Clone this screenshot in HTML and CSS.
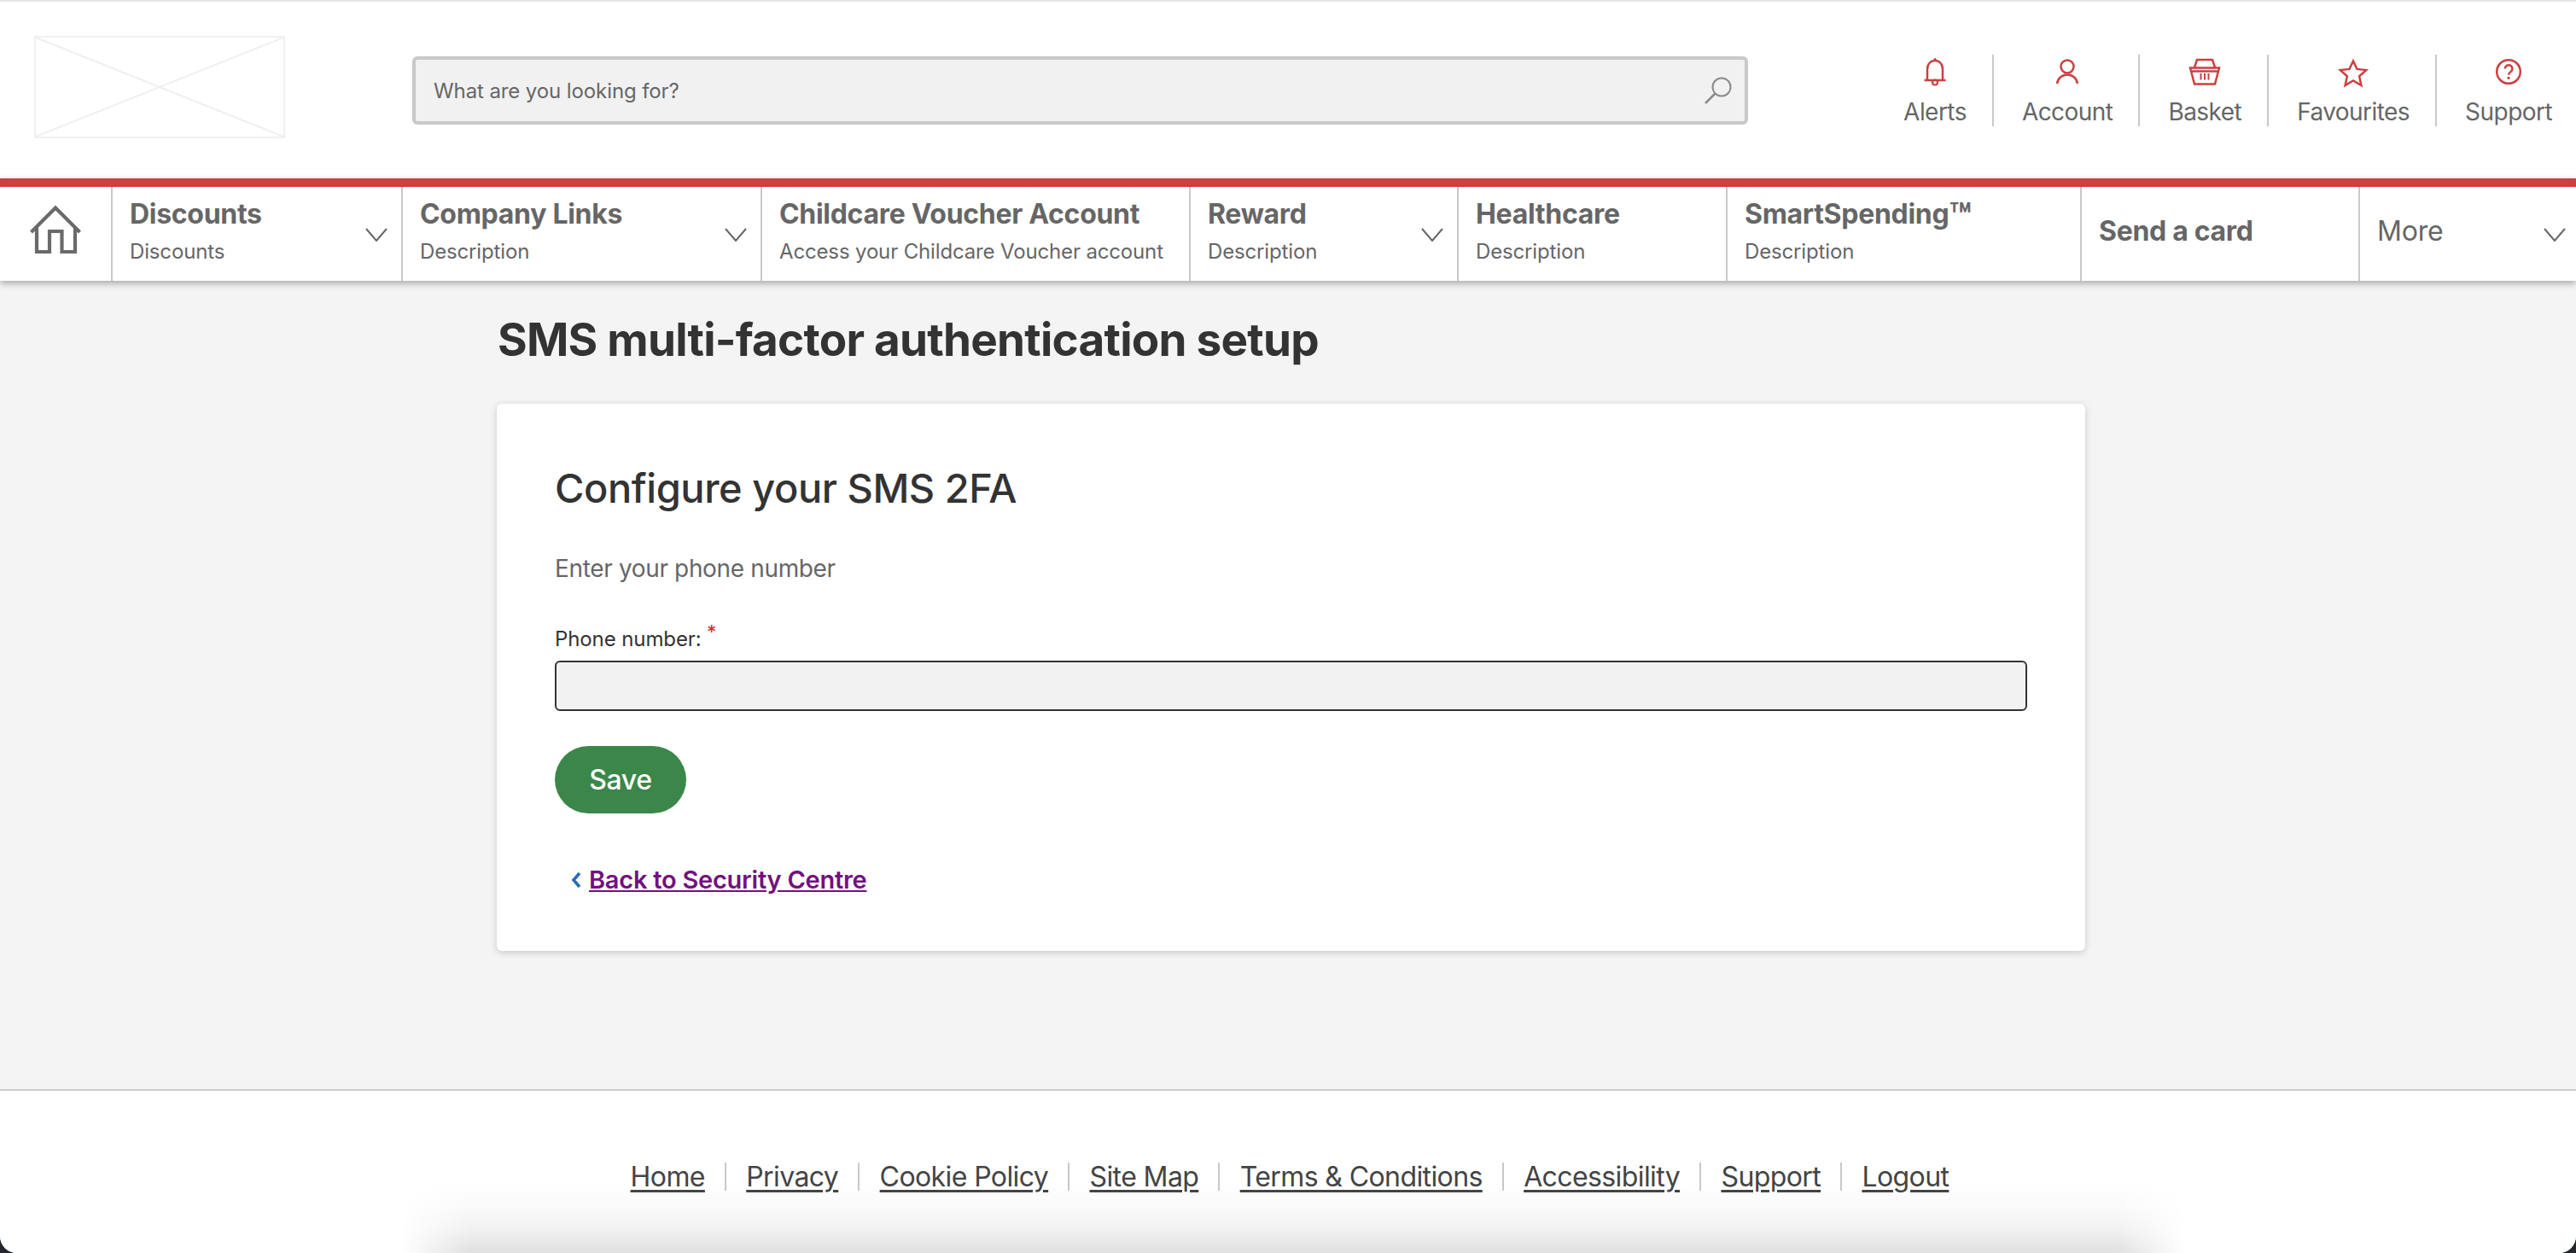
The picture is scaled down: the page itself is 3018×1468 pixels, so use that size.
FILE: index.html
```html
<!DOCTYPE html>
<html lang="en">
<head>
<meta charset="utf-8">
<title>SMS multi-factor authentication setup</title>
<link rel="stylesheet" href="styles.css">
</head>
<body>
<div class="page">
  <header class="header">
    <div class="logo">
      <svg viewBox="0 0 294 120" width="294" height="120" preserveAspectRatio="none"><rect x="1" y="1" width="292" height="118" fill="#fff" stroke="#f0f0f0" stroke-width="2"/><path d="M2 2 292 118M292 2 2 118" stroke="#f0f0f0" stroke-width="2" fill="none"/></svg>
    </div>
    <form class="search">
      <span class="search-text">What are you looking for?</span>
      <svg class="search-icon" viewBox="0 0 32 32" width="32" height="32"><circle cx="20" cy="12" r="10.500" fill="none" stroke="#8a8a8a" stroke-width="2"/><path d="M12.500 19.500 1 31" stroke="#8a8a8a" stroke-width="2.500" fill="none"/></svg>
    </form>
    <nav class="tools">
      <a class="tool">
        <svg viewBox="0 0 28 34" width="28" height="34"><circle cx="14" cy="2.500" r="1.500" fill="#cc4040"/><path d="M5 27V14C5 8 9 4 14 4s9 4 9 10v13M1.500 27h25" fill="none" stroke="#cc4040" stroke-width="2.500"/><circle cx="14" cy="29.500" r="3" fill="none" stroke="#cc4040" stroke-width="2.200"/></svg>
        <span>Alerts</span>
      </a>
      <a class="tool">
        <svg viewBox="0 0 28 34" width="28" height="34"><circle cx="14" cy="11" r="7.500" fill="none" stroke="#cc4040" stroke-width="2.500"/><path d="M2 31C3 24.500 8 20.500 14 20.500S25 24.500 26 31" fill="none" stroke="#cc4040" stroke-width="2.500"/></svg>
        <span>Account</span>
      </a>
      <a class="tool">
        <svg viewBox="0 0 38 34" width="38" height="34"><path d="M7 12 10 3h18l3 9" fill="none" stroke="#cc4040" stroke-width="2.500"/><path d="M2 12.500h34l-1.200 4.500L31 31.500H7L3.200 17zM3 16.500h32" fill="none" stroke="#cc4040" stroke-width="2.500"/><path d="M14.500 19v7.500M19 19v7.500M23.500 19v7.500" stroke="#cc4040" stroke-width="2"/></svg>
        <span>Basket</span>
      </a>
      <a class="tool">
        <svg class="star" viewBox="0 0 36 34" width="36" height="34"><path d="M18 4.500 22.400 13.900 33.200 15.100 25.100 22.300 27.400 33 18 27.500 8.600 33 10.900 22.300 2.800 15.100 13.600 13.900z" fill="none" stroke="#cc4040" stroke-width="2.500"/></svg>
        <span>Favourites</span>
      </a>
      <a class="tool">
        <svg viewBox="0 0 32 34" width="32" height="34"><circle cx="16" cy="17" r="13.800" fill="none" stroke="#cc4040" stroke-width="2.500"/><path d="M11.800 13.500a4.300 4.300 0 1 1 6.800 3.500c-1.800 1.200-2.600 2-2.600 3.800" fill="none" stroke="#cc4040" stroke-width="2.500"/><circle cx="16" cy="24.300" r="1.600" fill="#cc4040"/></svg>
        <span>Support</span>
      </a>
    </nav>
  </header>
  <nav class="mainnav">
    <a class="cell cell-home">
      <svg viewBox="0 0 60 58" width="60" height="58"><path d="M1.500 32 30 3.500 58.500 32M8 26v29h15V31h14.500v24H53V26" fill="none" stroke="#6a6a6a" stroke-width="4.200"/></svg>
    </a>
    <a class="cell"><span class="cell-text"><b>Discounts</b><small>Discounts</small></span><svg class="chev" viewBox="0 0 26 16" width="26" height="16"><path d="M1 1 13 15 25 1" fill="none" stroke="#666" stroke-width="2"/></svg></a>
    <a class="cell"><span class="cell-text"><b>Company Links</b><small>Description</small></span><svg class="chev" viewBox="0 0 26 16" width="26" height="16"><path d="M1 1 13 15 25 1" fill="none" stroke="#666" stroke-width="2"/></svg></a>
    <a class="cell"><span class="cell-text"><b>Childcare Voucher Account</b><small>Access your Childcare Voucher account</small></span></a>
    <a class="cell"><span class="cell-text"><b>Reward</b><small>Description</small></span><svg class="chev" viewBox="0 0 26 16" width="26" height="16"><path d="M1 1 13 15 25 1" fill="none" stroke="#666" stroke-width="2"/></svg></a>
    <a class="cell"><span class="cell-text"><b>Healthcare</b><small>Description</small></span></a>
    <a class="cell"><span class="cell-text"><b>SmartSpending<span class="tm">™</span></b><small>Description</small></span></a>
    <a class="cell"><span class="cell-text cell-single"><b>Send a card</b></span></a>
    <a class="cell cell-last"><span class="cell-text cell-single"><span class="more">More</span></span><svg class="chev" viewBox="0 0 26 16" width="26" height="16"><path d="M1 1 13 15 25 1" fill="none" stroke="#666" stroke-width="2"/></svg></a>
  </nav>
  <main class="main">
    <h1 class="title">SMS multi-factor authentication setup</h1>
    <section class="card">
      <h2 class="card-title">Configure your SMS 2FA</h2>
      <p class="intro">Enter your phone number</p>
      <label class="label">Phone number: <sup class="req">*</sup></label>
      <div class="input"></div>
      <button class="save" type="button">Save</button>
      <div class="back">
        <svg viewBox="0 0 12 20" width="12" height="20"><path d="M10 2 3 10l7 8" fill="none" stroke="#2a6ebb" stroke-width="3.600"/></svg>
        <a>Back to Security Centre</a>
      </div>
    </section>
  </main>
  <footer class="footer">
    <ul class="links">
      <li><a>Home</a></li><li><a>Privacy</a></li><li><a>Cookie Policy</a></li><li><a>Site Map</a></li><li><a>Terms &amp; Conditions</a></li><li><a>Accessibility</a></li><li><a>Support</a></li><li><a>Logout</a></li>
    </ul>
  </footer>
</div>
</body>
</html>
```
FILE: styles.css
```css
* { box-sizing: border-box; }
html, body { margin: 0; height: 100%; overflow: hidden; background: #23272e; }
body { font-family: Inter, "Liberation Sans", sans-serif; color: #666; }
.page { height: 1468px; display: flex; flex-direction: column; background: #fff; border-top: 2px solid #e5e5e5; border-radius: 0 0 20px 20px; overflow: hidden; position: relative; }

.header { height: 207px; flex: none; display: flex; align-items: flex-start; background: #fff; }
.logo { margin: 40px 0 0 40px; width: 294px; height: 120px; flex: none; }
.logo svg { display: block; }
.search { margin: 64px 0 0 149px; width: 1565px; height: 80px; flex: none; display: flex; align-items: center; justify-content: space-between; padding: 0 15px 0 21px; background: #f1f1f1; border: 4px solid #c9c9c9; border-radius: 6px; }
.search-text { font-size: 24px; letter-spacing: -.1px; color: #666; }
.search-icon { display: block; }
.tools { margin: 62px 0 0 auto; display: flex; height: 84px; }
.tool { display: flex; flex-direction: column; align-items: center; justify-content: space-between; padding: 3px 30px 0 33px; border-right: 2px solid #c9c9c9; font-size: 28px; line-height: 34px; letter-spacing: -.55px; color: #666; }
.tool svg { display: block; overflow: visible; }
.tool:last-child { border-right: 0; padding-right: 28px; }

.mainnav { height: 120px; flex: none; display: grid; grid-template-columns: 132px 340px 421px 502px 314px 315px 415px 326px 1fr; background: #fff; border-top: 10px solid #cc4040; box-shadow: 0 3px 8px rgba(0,0,0,.32); position: relative; z-index: 2; }
.cell { display: flex; align-items: center; justify-content: space-between; padding: 0 16px 0 20px; border-right: 2px solid #c9c9c9; }
.cell-home { justify-content: center; padding: 0; }
.cell-home svg { display: block; margin-top: -10px; }
.cell-last { border-right: 0; padding-right: 12px; }
.cell-text { display: flex; flex-direction: column; margin-top: -2px; }
.cell-single { margin-top: -6px; }
.cell-text b { font-size: 32px; line-height: 44px; font-weight: 700; letter-spacing: -.3px; color: #666; white-space: nowrap; }
.cell-text small { font-size: 24px; line-height: 44px; letter-spacing: -.15px; color: #666; white-space: nowrap; }
.tm { font-size: 42px; line-height: 0; font-weight: 700; vertical-align: -6px; }
.more { font-size: 32px; line-height: 44px; letter-spacing: -.2px; color: #666; }
.chev { display: block; margin-top: 2px; flex: none; }

.main { flex: 1; background: #f4f4f4; padding: 0 575px 0 582px; border-bottom: 2px solid #ccc; }
.title { margin: 32px 0 0 1px; font-size: 53px; line-height: 74px; font-weight: 700; letter-spacing: -.76px; color: #333; white-space: nowrap; }
.card { margin-top: 38px; height: 641px; padding: 68px 68px 0; background: #fff; border-radius: 6px; box-shadow: 0 2px 8px rgba(0,0,0,.18); }
.card-title { margin: 0; font-size: 47px; line-height: 62px; font-weight: 500; letter-spacing: -.45px; color: #333; }
.intro { margin: 46px 0 0; font-size: 28px; line-height: 34px; letter-spacing: -.35px; color: #666; }
.label { display: block; margin-top: 48px; font-size: 24px; line-height: 36px; letter-spacing: -.1px; color: #333; }
.req { color: #d22; font-size: 22px; line-height: 0; }
.input { margin-top: 7px; height: 59px; background: #f2f2f2; border: 2px solid #333; border-radius: 6px; }
.save { display: block; margin-top: 41px; width: 154px; height: 79px; background: #3b8749; color: #fff; border: 0; border-radius: 40px; font: 500 32px Inter, "Liberation Sans", sans-serif; letter-spacing: -.3px; }
.back { display: flex; align-items: center; gap: 9px; margin: 60px 0 0 19px; font-size: 29px; line-height: 36px; letter-spacing: -.25px; }
.back svg { display: block; }
.back a { color: #74107f; font-weight: 600; text-decoration: underline; }

.footer { height: 190px; flex: none; background: #fff; position: relative; overflow: hidden; }
.footer::after { content: ""; position: absolute; left: 470px; right: 458px; bottom: 0; height: 84px; background: linear-gradient(to bottom, transparent, rgba(0,0,0,.018) 35%, rgba(0,0,0,.05) 65%, rgba(0,0,0,.12)); -webkit-mask-image: linear-gradient(to right, transparent, #000 80px, #000 calc(100% - 80px), transparent); mask-image: linear-gradient(to right, transparent, #000 80px, #000 calc(100% - 80px), transparent); }
.links { position: relative; z-index: 1; display: flex; justify-content: center; margin: 84px 0 0; padding: 0 0 0 4px; list-style: none; }
.links li { height: 33px; padding: 0 23.200px; border-right: 2px solid #c9c9c9; font-size: 32px; line-height: 33px; letter-spacing: -.6px; }
.links li:last-child { border-right: 0; }
.links a { color: #444; text-decoration: underline; text-decoration-thickness: 3px; text-underline-offset: 4px; }
```
